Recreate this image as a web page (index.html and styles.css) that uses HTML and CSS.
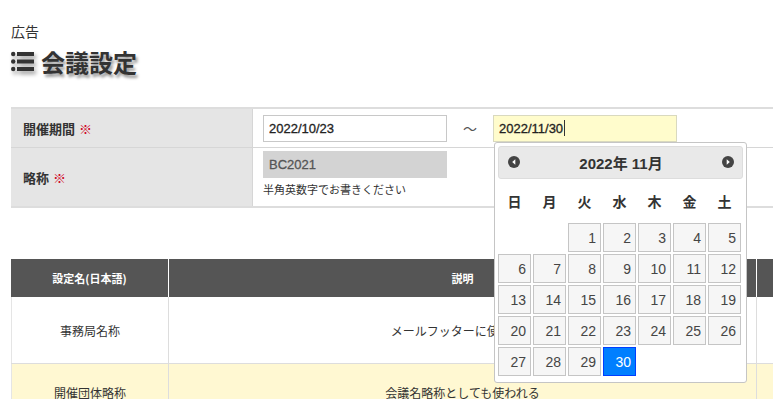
FILE: index.html
```html
<!DOCTYPE html>
<html lang="ja">
<head>
<meta charset="utf-8">
<title>会議設定</title>
<link rel="stylesheet" href="styles.css">
</head>
<body>
<div class="page">
  <div class="ad">広告</div>
  <h1 class="title">
    <svg class="list-icon" width="23" height="21" viewBox="0 0 23 21">
      <circle cx="2.2" cy="3" r="2.2" fill="#333"/>
      <circle cx="2.2" cy="10.5" r="2.2" fill="#333"/>
      <circle cx="2.2" cy="18" r="2.2" fill="#333"/>
      <rect x="6" y="1" width="17" height="4" fill="#333"/>
      <rect x="6" y="8.5" width="17" height="4" fill="#333"/>
      <rect x="6" y="16" width="17" height="4" fill="#333"/>
    </svg>
    <span>会議設定</span>
  </h1>

  <div class="form-table">
    <div class="frow frow-period">
      <div class="flabel">開催期間 <span class="req">※</span></div>
      <div class="fvalue">
        <input class="inp" type="text" value="2022/10/23">
        <span class="tilde">～</span>
        <div class="date-wrap">
          <div class="inp inp-active">2022/11/30<span class="caret"></span></div>
          <div class="datepicker">
            <div class="dp-header">
              <span class="dp-nav"><svg width="12" height="12" viewBox="0 0 12 12"><circle cx="6" cy="6" r="6" fill="#444"/><path d="M7.3 3.3 L4.2 6 L7.3 8.7 Z" fill="#fff"/></svg></span>
              <span class="dp-title">2022年 11月</span>
              <span class="dp-nav"><svg width="12" height="12" viewBox="0 0 12 12"><circle cx="6" cy="6" r="6" fill="#444"/><path d="M4.7 3.3 L7.8 6 L4.7 8.7 Z" fill="#fff"/></svg></span>
            </div>
            <div class="dp-grid">
              <div class="wd">日</div><div class="wd">月</div><div class="wd">火</div><div class="wd">水</div><div class="wd">木</div><div class="wd">金</div><div class="wd">土</div>
              <div class="empty"></div><div class="empty"></div>
              <div class="day">1</div><div class="day">2</div><div class="day">3</div><div class="day">4</div><div class="day">5</div>
              <div class="day">6</div><div class="day">7</div><div class="day">8</div><div class="day">9</div><div class="day">10</div><div class="day">11</div><div class="day">12</div>
              <div class="day">13</div><div class="day">14</div><div class="day">15</div><div class="day">16</div><div class="day">17</div><div class="day">18</div><div class="day">19</div>
              <div class="day">20</div><div class="day">21</div><div class="day">22</div><div class="day">23</div><div class="day">24</div><div class="day">25</div><div class="day">26</div>
              <div class="day">27</div><div class="day">28</div><div class="day">29</div><div class="day day-active">30</div>
            </div>
          </div>
        </div>
      </div>
    </div>
    <div class="frow frow-abbr">
      <div class="flabel">略称 <span class="req">※</span></div>
      <div class="fvalue fvalue-col">
        <div class="inp inp-disabled">BC2021</div>
        <div class="help">半角英数字でお書きください</div>
      </div>
    </div>
  </div>

  <div class="data-table">
    <div class="drow dhead">
      <div class="c1">設定名(日本語)</div>
      <div class="c2">説明</div>
      <div class="c3"></div>
    </div>
    <div class="drow dbody dfirst">
      <div class="c1">事務局名称</div>
      <div class="c2">メールフッターに使われる</div>
      <div class="c3"></div>
    </div>
    <div class="drow dbody dyellow">
      <div class="c1">開催団体略称</div>
      <div class="c2">会議名略称としても使われる</div>
      <div class="c3"></div>
    </div>
  </div>
</div>
</body>
</html>
```

FILE: styles.css
```css
html, body {
  margin: 0;
  padding: 0;
  overflow: hidden;
  background: #fff;
}
body {
  font-family: "Liberation Sans", "Noto Sans CJK JP", sans-serif;
  color: #333;
}
.page {
  padding: 21px 0 0 11px;
  width: 800px;
}
.ad {
  font-size: 14px;
  line-height: 20px;
  font-family: "Noto Sans CJK JP", sans-serif;
  color: #333;
}
.title {
  margin: 5px 0 0;
  height: 30px;
  display: flex;
  align-items: center;
  gap: 7px;
  font-size: 24px;
  font-weight: bold;
  font-family: "Noto Sans CJK JP", sans-serif;
  color: #333;
  text-shadow: 2px 3px 3px rgba(0,0,0,0.4);
}
.list-icon {
  filter: drop-shadow(2px 3px 2px rgba(0,0,0,0.4));
}

.form-table {
  margin-top: 31px;
  border-top: 2px solid #ddd;
  border-bottom: 2px solid #ddd;
  width: 780px;
}
.frow {
  display: flex;
}
.frow + .frow {
  border-top: 1px solid #d6d6d6;
}
.frow-period { height: 38px; }
.frow-abbr { height: 58px; }
.flabel {
  width: 229px;
  flex: none;
  background: #e5e5e5;
  border-right: 1px solid #d6d6d6;
  display: flex;
  align-items: center;
  padding-left: 12px;
  font-size: 13px;
  font-weight: bold;
  font-family: "Noto Sans CJK JP", sans-serif;
  color: #333;
  gap: 4px;
}
.req {
  color: #d0021b;
  font-weight: normal;
}
.fvalue {
  flex: 1;
  display: flex;
  align-items: center;
  padding-left: 10px;
}
.fvalue-col {
  flex-direction: column;
  align-items: flex-start;
  justify-content: flex-start;
  padding-top: 3px;
}
.inp {
  box-sizing: border-box;
  width: 184px;
  height: 27px;
  border: 1px solid #c8c8c8;
  padding: 0 5px;
  font-family: "Liberation Sans", sans-serif;
  font-size: 13px;
  color: #222;
  background: #fff;
  display: flex;
  align-items: center;
  margin: 0;
  outline: none;
  -webkit-text-stroke: 0.3px #222;
}
.inp-active {
  background: #fffccc;
  border-color: #d9d9bf;
}
.caret {
  display: inline-block;
  width: 1px;
  height: 16px;
  background: #333;
  margin-left: 1px;
}
.inp-disabled {
  background: #d3d3d3;
  border-color: #d3d3d3;
  color: #555;
  -webkit-text-stroke: 0.3px #555;
}
.help {
  margin-top: 3px;
  font-size: 11px;
  line-height: 16px;
  font-family: "Noto Sans CJK JP", sans-serif;
  color: #333;
}
.tilde {
  width: 46px;
  text-align: center;
  font-size: 14px;
  color: #555;
  font-family: "Noto Sans CJK JP", sans-serif;
}
.date-wrap {
  position: relative;
}
.datepicker {
  position: absolute;
  left: 1px;
  top: 27px;
  width: 245px;
  padding: 3px 3px 6px;
  background: #fff;
  border: 1px solid #c5c5c5;
  border-radius: 3px;
  z-index: 10;
}
.dp-header {
  height: 31px;
  background: #e9e9e9;
  border: 1px solid #ddd;
  border-radius: 3px;
  display: flex;
  align-items: center;
  justify-content: space-between;
  padding: 0 8px 0 9px;
}
.dp-nav {
  display: flex;
}
.dp-title {
  font-size: 15px;
  font-weight: bold;
  color: #333;
  font-family: "Liberation Sans", "Noto Sans CJK JP", sans-serif;
}
.dp-grid {
  display: grid;
  grid-template-columns: repeat(7, 33px);
  grid-template-rows: 40px;
  grid-auto-rows: 29px;
  column-gap: 2px;
  row-gap: 2px;
  margin-top: 2px;
}
.wd {
  display: flex;
  align-items: center;
  justify-content: center;
  font-size: 14px;
  font-weight: bold;
  color: #333;
  font-family: "Noto Sans CJK JP", sans-serif;
  grid-row: 1;
}
.day {
  box-sizing: border-box;
  border: 1px solid #c5c5c5;
  background: #f6f6f6;
  color: #454545;
  font-size: 14px;
  text-align: right;
  padding: 6px 4px 0 0;
  font-family: "Liberation Sans", sans-serif;
}
.day-active {
  background: #007fff;
  border-color: #003eff;
  color: #fff;
}

.data-table {
  margin-top: 51px;
  width: 800px;
  font-family: "Noto Sans CJK JP", sans-serif;
}
.drow {
  display: flex;
}
.drow > div {
  display: flex;
  align-items: center;
  justify-content: center;
  box-sizing: border-box;
}
.c1 { width: 157px; flex: none; }
.c2 { width: 588px; flex: none; }
.c3 { flex: 1; }
.dhead {
  height: 38px;
  background: #555;
  color: #fff;
  font-size: 11px;
  font-weight: bold;
}
.dhead > div + div {
  border-left: 1px solid #fff;
}
.dbody {
  font-size: 12px;
  color: #333;
  border-bottom: 1px solid #ddd;
}
.dfirst { height: 66px; }
.dyellow { height: 57px; background: #fff8d2; }
.dbody > div + div {
  border-left: 1px solid #ddd;
}
.dbody > div:first-child {
  border-left: 1px solid #e5e5e5;
}
```
